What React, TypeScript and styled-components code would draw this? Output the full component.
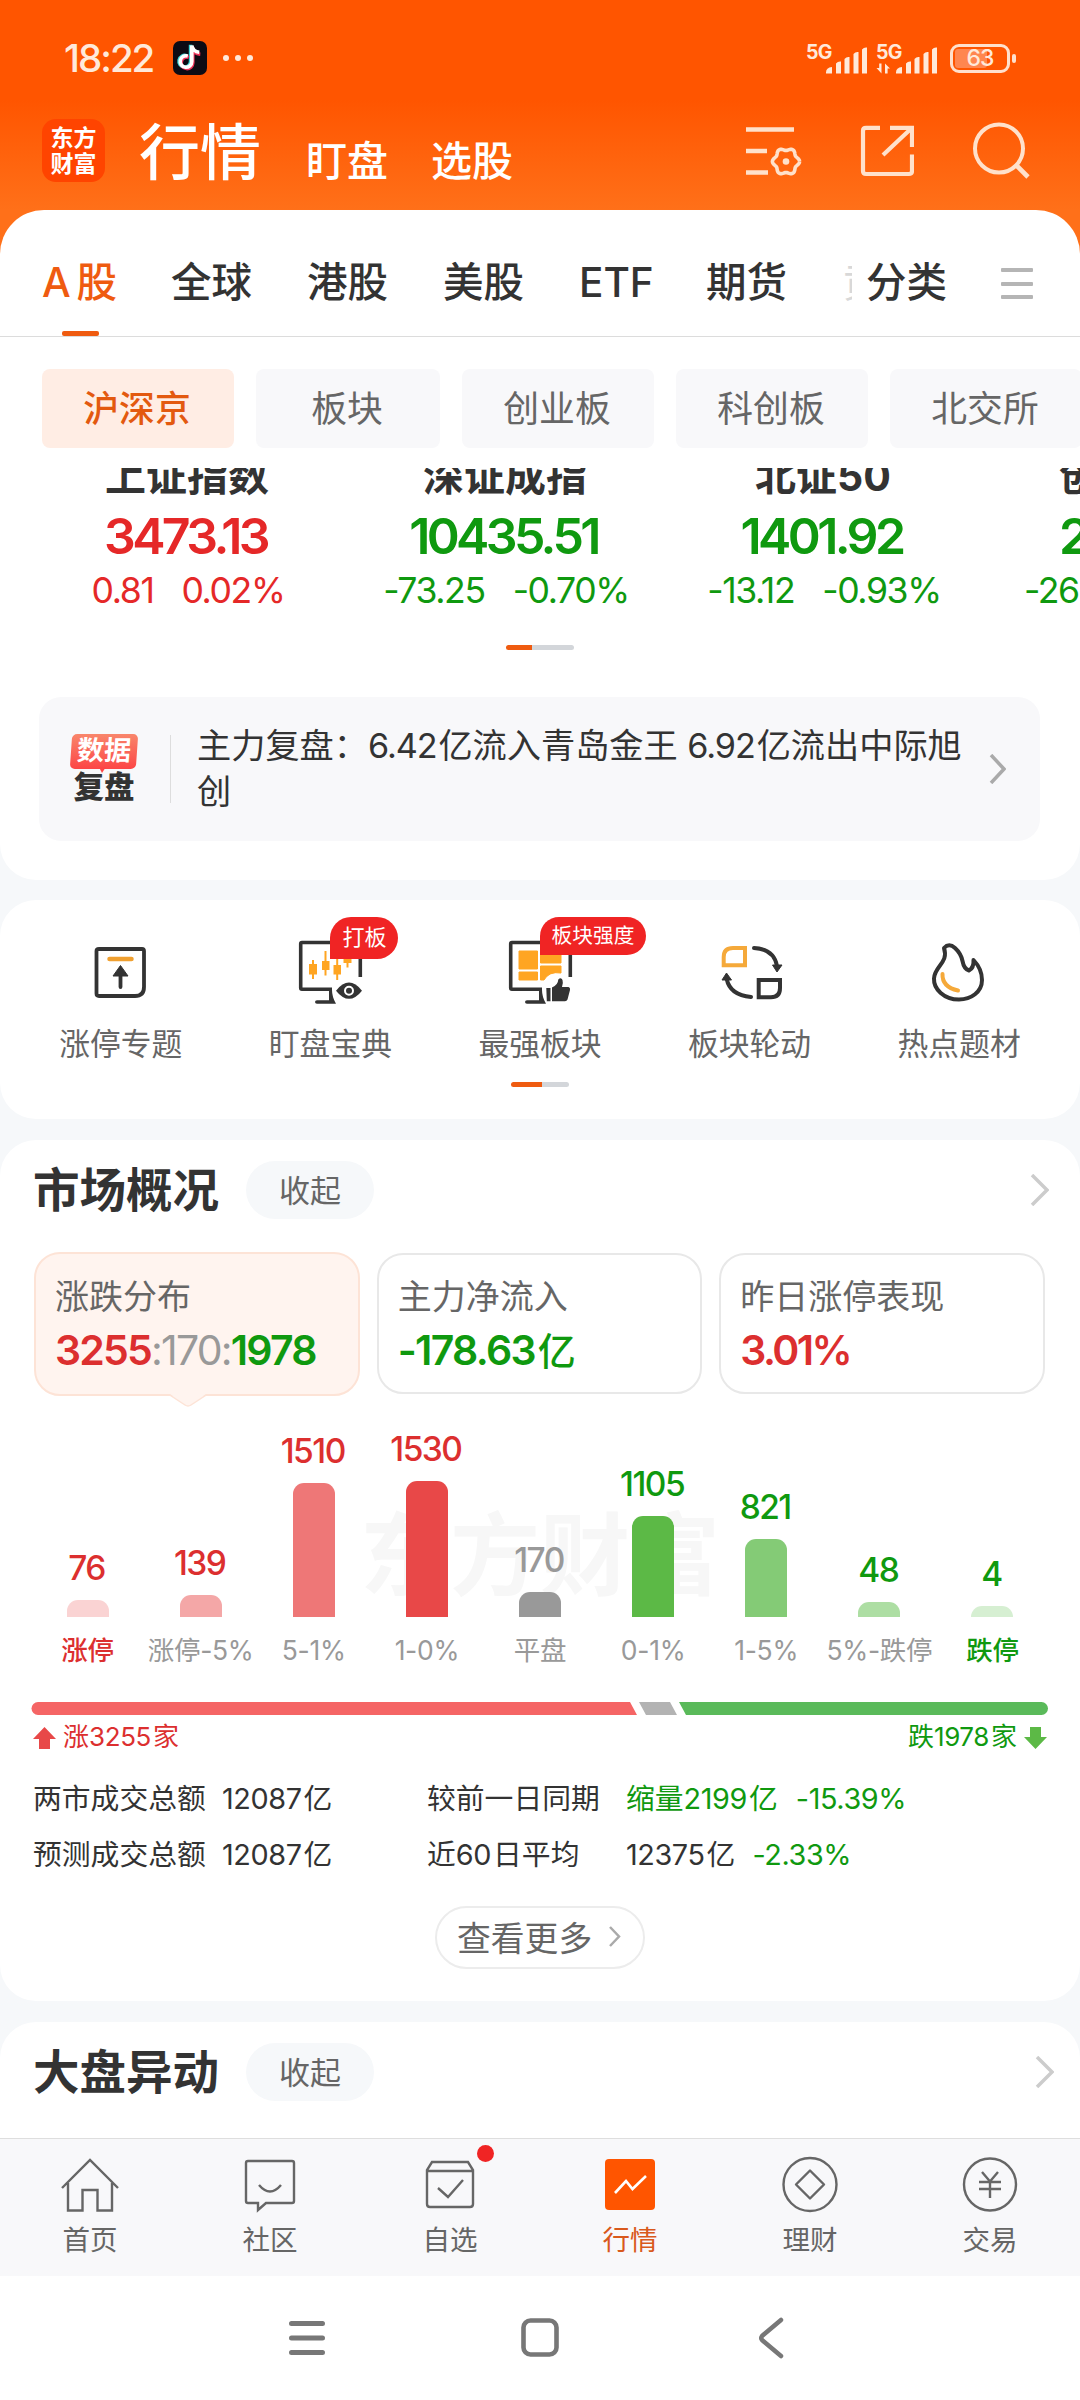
import React from "react";
import styled, { createGlobalStyle } from "styled-components";

const RED = "#dc2f2f";
const GREEN = "#0f990f";
const ORANGE = "#ef5b10";

const Global = createGlobalStyle`
  * { box-sizing: border-box; }
  html, body { margin: 0; padding: 0; background: #fff; }
  body { overflow: hidden; }
  svg { display: block; flex: none; }
`;

const Screen = styled.div`
  width: 1080px;
  height: 2400px;
  overflow: hidden;
  display: flex;
  flex-direction: column;
  background: #f6f8fa;
  color: #333;
  font-family: Inter, "Noto Sans CJK SC", sans-serif;
  white-space: nowrap;
`;

/* ---------- text ---------- */

const Clock = styled.span`
  width: 90px;
  font-size: 38.5px;
  line-height: 1.2;
  font-weight: 500;
  letter-spacing: -2px;
`;

const Num = styled.span<{ $ls?: number }>`
  letter-spacing: ${(p) => p.$ls ?? -0.4}px;
  margin-right: 2px;
`;

const Tint = styled.span<{ $color: string; $weight?: number }>`
  color: ${(p) => p.$color};
  font-weight: ${(p) => p.$weight ?? "inherit"};
`;

/* ---------- header ---------- */

const Hero = styled.header`
  height: 272px;
  flex: none;
  margin-bottom: -62px;
  background: linear-gradient(#ff5500 0, #ff5500 100px, #ff7019 210px);
  color: #fff;
`;

const StatusBar = styled.div`
  height: 116px;
  display: flex;
  align-items: center;
  padding: 0 70px 0 64px;
  color: #ffe9da;
`;

const StatusLeft = styled.div`
  display: flex;
  align-items: center;
  flex: 1;
`;

const Dots = styled.div`
  display: flex;
  gap: 6px;
  margin-left: 16px;
  i {
    width: 6px;
    height: 6px;
    border-radius: 3px;
    background: #ffe9da;
  }
`;

const Battery = styled.div`
  position: relative;
  width: 60px;
  height: 29px;
  border: 3px solid #ffe0cc;
  border-radius: 9px;
  margin-left: 12px;
  padding: 2px;
  display: flex;
  &::before {
    content: "";
    width: 32px;
    border-radius: 3px;
    background: #ff8650;
  }
  &::after {
    content: "";
    position: absolute;
    right: -9px;
    top: 7px;
    width: 4px;
    height: 9px;
    border-radius: 2px;
    background: #ffe0cc;
  }
`;

const BatteryText = styled.span`
  position: absolute;
  inset: 0;
  text-align: center;
  font-size: 23px;
  line-height: 23px;
  font-weight: 500;
  letter-spacing: -1px;
`;

const TitleBar = styled.div`
  height: 94px;
  display: flex;
  padding: 3px 47px 0 42px;
`;

const Logo = styled.div`
  width: 63px;
  height: 63px;
  border-radius: 14px;
  background: #ff4400;
  display: flex;
  flex-direction: column;
  justify-content: center;
  align-items: center;
  font-size: 23px;
  line-height: 26px;
  font-weight: 700;
`;

const Titles = styled.div`
  flex: 1;
  display: flex;
  align-items: baseline;
  line-height: 72px;
  margin-left: 34px;
  margin-top: -2px;
`;

const TitleMain = styled.span`
  font-size: 61px;
  font-weight: 500;
  line-height: 72px;
`;

const TitleSub = styled.span<{ $gap: number }>`
  position: relative;
  top: 1px;
  font-size: 41px;
  font-weight: 500;
  margin-left: ${(p) => p.$gap}px;
`;

const HeaderIcons = styled.div`
  display: flex;
`;

/* ---------- first sheet ---------- */

const Card = styled.section<{ $h: number; $mb?: number; $r?: string }>`
  flex: none;
  display: flex;
  flex-direction: column;
  height: ${(p) => p.$h}px;
  margin-bottom: ${(p) => p.$mb ?? 0}px;
  border-radius: ${(p) => p.$r ?? "36px"};
  background: #fff;
  overflow: hidden;
`;

const Tabs = styled.nav`
  height: 127px;
  flex: none;
  border-bottom: 1px solid #dcdcdc;
  display: flex;
  padding-left: 42px;
`;

const Tab = styled.div<{ $w: number; $active?: boolean }>`
  width: ${(p) => p.$w}px;
  flex: none;
  padding-top: 48px;
  font-size: 40.5px;
  line-height: 50px;
  font-weight: 500;
  word-spacing: -5px;
  color: ${(p) => (p.$active ? ORANGE : "#333")};
  &::after {
    content: "";
    display: ${(p) => (p.$active ? "block" : "none")};
    width: 37px;
    height: 5px;
    margin: 23px 0 0 20px;
    border-radius: 2px;
    background: ${ORANGE};
  }
`;

const FadedTab = styled(Tab)`
  overflow: hidden;
  color: #d8d8d8;
  margin-right: 14px;
  font-weight: 400;
`;

const Burger = styled.div`
  margin: 58px 0 0 21px;
  display: flex;
  flex-direction: column;
  gap: 9.5px;
  i {
    width: 32px;
    height: 4px;
    border-radius: 1px;
    background: #b5b5b5;
  }
`;

const Chips = styled.div`
  display: flex;
  flex: none;
  gap: 22px;
  padding: 32px 0 0 42px;
  height: 131px;
`;

const Chip = styled.div<{ $w: number; $active?: boolean }>`
  flex: none;
  width: ${(p) => p.$w}px;
  height: 79px;
  border-radius: 8px;
  display: flex;
  justify-content: center;
  align-items: center;
  padding: 0 2px 5px 0;
  font-size: 35.8px;
  background: ${(p) => (p.$active ? "#ffede4" : "#f8f8fa")};
  color: ${(p) => (p.$active ? "#e3590f" : "#666")};
  font-weight: ${(p) => (p.$active ? 500 : 400)};
`;

const Indices = styled.div`
  display: flex;
  flex: none;
  height: 167px;
  overflow: hidden;
  padding-left: 29px;
`;

const IndexCell = styled.div<{ $color: string }>`
  flex: none;
  width: 318px;
  display: flex;
  flex-direction: column;
  align-items: center;
  color: ${(p) => p.$color};
`;

const ClippedCell = styled(IndexCell)`
  width: 97px;
  padding-left: 76px;
  align-items: flex-start;
`;

const IndexName = styled.div`
  height: 38px;
  margin-top: -17px;
  padding-right: 2px;
  font-size: 41px;
  line-height: 50px;
  font-weight: 700;
  color: #333;
`;

const IndexValue = styled.div`
  margin-top: 17px;
  height: 60px;
  padding-right: 5px;
  font-size: 50px;
  line-height: 60px;
  font-weight: 600;
  letter-spacing: -3.6px;
`;

const IndexChange = styled.div<{ $ml?: number }>`
  margin-top: 3px;
  margin-left: ${(p) => p.$ml ?? 0}px;
  height: 44px;
  display: flex;
  gap: 28px;
  font-size: 35.6px;
  line-height: 44px;
  letter-spacing: -1.4px;
`;

const Pager = styled.div<{ $w: number; $on: number; $mt: number }>`
  flex: none;
  width: ${(p) => p.$w}px;
  height: 5px;
  margin: ${(p) => p.$mt}px auto 0;
  border-radius: 2.5px;
  background: linear-gradient(90deg, ${ORANGE} ${(p) => p.$on}px, #d3d6da ${(p) => p.$on}px);
`;

const Review = styled.div`
  flex: none;
  margin: 47px 40px 0 39px;
  height: 144px;
  border-radius: 22px;
  background: #f8f8fa;
  display: flex;
  align-items: center;
`;

const ReviewBadge = styled.div`
  margin-left: 31px;
  width: 68px;
  display: flex;
  flex-direction: column;
  align-items: center;
`;

const ReviewTop = styled.div`
  position: relative;
  width: 66px;
  height: 35px;
  border-radius: 5px;
  transform: skewX(-4deg);
  background: linear-gradient(#f9866b, #fc4646);
  color: #fff;
  text-align: center;
  font-size: 27px;
  line-height: 33px;
  font-weight: 700;
  &::after {
    content: "";
    position: absolute;
    left: 29px;
    top: 33px;
    width: 7px;
    height: 6px;
    background: #fc4646;
    clip-path: polygon(0 0, 100% 0, 50% 100%);
  }
`;

const ReviewBottom = styled.div`
  font-size: 30.5px;
  line-height: 35px;
  font-weight: 900;
`;

const ReviewText = styled.div`
  width: 772px;
  margin-left: 26px;
  margin-right: 20px;
  font-size: 34.2px;
  line-height: 46px;
  white-space: pre-line;
`;

const VLine = styled.div`
  width: 1px;
  height: 68px;
  margin-left: 32px;
  background: #ddd;
`;

/* ---------- quick entries ---------- */

const QuickRow = styled.div`
  display: flex;
  flex: none;
  height: 182px;
  padding: 37px 16px 0;
`;

const Quick = styled.div`
  position: relative;
  flex: 1;
  display: flex;
  flex-direction: column;
  align-items: center;
  font-size: 30.8px;
  color: #666;
  gap: 17px;
  line-height: 40px;
`;

const Badge = styled.span<{ $h: number; $w: number; $fs: number }>`
  position: absolute;
  left: 50%;
  top: -20px;
  width: ${(p) => p.$w}px;
  height: ${(p) => p.$h}px;
  line-height: ${(p) => p.$h - 1}px;
  font-size: ${(p) => p.$fs}px;
  text-align: center;
  color: #fff;
  background: #f02424;
  border-radius: 21px 21px 21px 0;
`;

/* ---------- market overview ---------- */

const SectionHead = styled.div<{ $pr: number }>`
  flex: none;
  height: 58px;
  margin-top: 21px;
  padding: 0 ${(p) => p.$pr}px 0 33px;
  display: flex;
  align-items: center;
`;

const SectionTitle = styled.h2`
  margin: 0;
  width: 213px;
  font-size: 46.5px;
  line-height: 58px;
  font-weight: 700;
`;

const Pill = styled.div`
  width: 128px;
  height: 58px;
  border-radius: 29px;
  background: #f6f8fa;
  color: #666;
  display: flex;
  align-items: center;
  justify-content: center;
  padding-bottom: 3px;
  font-size: 31px;
  margin-right: auto;
`;

const StatRow = styled.div`
  flex: none;
  display: flex;
  gap: 17px;
  padding: 0 35px 0 34px;
  margin-top: 33px;
  height: 144px;
`;

const Stat = styled.div<{ $active?: boolean }>`
  position: relative;
  flex: 1;
  margin: ${(p) => (p.$active ? "0" : "1px 0 2px")};
  border: 2px solid ${(p) => (p.$active ? "#fde3d6" : "#e8e8e8")};
  background: ${(p) => (p.$active ? "#fff4ef" : "#fff")};
  border-radius: 26px;
  padding: ${(p) => (p.$active ? 20 : 19)}px 0 0 19px;
  font-size: 34px;
  line-height: 46px;
  color: #666;
`;

const StatValue = styled.div<{ $color: string; $ls?: number }>`
  margin-top: 5px;
  height: 50px;
  font-size: 41px;
  line-height: 50px;
  font-weight: 600;
  letter-spacing: ${(p) => p.$ls ?? -1.7}px;
  color: ${(p) => p.$color};
`;

const Unit = styled.span`
  margin-left: 3px;
  font-size: 38px;
  font-weight: 500;
`;

const Pointer = styled.svg`
  position: absolute;
  left: 134px;
  top: 140px;
`;

const Chart = styled.div`
  position: relative;
  flex: none;
  height: 275px;
  padding: 0 31px;
  display: flex;
  align-items: flex-end;
`;

const Watermark = styled.div`
  position: absolute;
  left: 360px;
  top: 100px;
  font-size: 90px;
  line-height: 120px;
  font-weight: 700;
  color: #f7f7f7;
`;

const Column = styled.div`
  position: relative;
  flex: 1;
  display: flex;
  flex-direction: column;
  align-items: center;
`;

const ColumnValue = styled.div<{ $color: string }>`
  font-size: 33.5px;
  line-height: 40px;
  font-weight: 500;
  letter-spacing: -1.5px;
  padding-right: 2px;
  margin-bottom: 12px;
  color: ${(p) => p.$color};
`;

const Bar = styled.div<{ $color: string }>`
  width: 42px;
  border-radius: 11px 11px 0 0;
  background: ${(p) => p.$color};
`;

const ColumnLabel = styled.div<{ $color: string; $strong?: boolean }>`
  height: 54px;
  padding-top: 16px;
  font-size: 26.5px;
  line-height: 34px;
  letter-spacing: -0.3px;
  font-weight: ${(p) => (p.$strong ? 500 : 400)};
  color: ${(p) => p.$color};
`;

const Ratio = styled.svg`
  margin: 31px 0 0 31px;
`;

const RatioLegend = styled.div`
  flex: none;
  height: 44px;
  padding: 0 33px;
  display: flex;
  justify-content: space-between;
  align-items: center;
`;

const Side = styled.div<{ $color: string }>`
  display: flex;
  align-items: center;
  gap: 7px;
  font-size: 26px;
  line-height: 30px;
  color: ${(p) => p.$color};
`;

const SideText = styled.span`
  padding-bottom: 2px;
`;

const Totals = styled.div`
  flex: none;
  display: grid;
  grid-template-columns: 189px 205px 199px auto;
  grid-auto-rows: 56px;
  align-items: center;
  margin-top: 8px;
  padding-left: 33px;
  font-size: 28.8px;
`;

const Delta = styled.span<{ $ml?: number }>`
  margin-left: ${(p) => p.$ml ?? 0}px;
  color: ${GREEN};
`;

const More = styled.div`
  flex: none;
  width: 210px;
  height: 63px;
  margin: 26px auto 0;
  border: 2px solid #ececec;
  border-radius: 32px;
  display: flex;
  align-items: center;
  gap: 16px;
  padding: 0 0 3px 20px;
  font-size: 33.8px;
  color: #666;
`;

/* ---------- bottom ---------- */

const TabBar = styled.nav`
  flex: none;
  height: 138px;
  border-top: 1px solid #dedede;
  background: #f8f8fa;
  display: flex;
  padding-top: 15px;
`;

const TabItem = styled.div<{ $active?: boolean }>`
  position: relative;
  flex: 1;
  display: flex;
  flex-direction: column;
  align-items: center;
  gap: 8px;
  font-size: 27.5px;
  line-height: 36px;
  color: ${(p) => (p.$active ? "#d9591c" : "#666")};
`;

const RedDot = styled.i`
  position: absolute;
  left: 117px;
  top: -9px;
  width: 17px;
  height: 17px;
  border-radius: 50%;
  background: #f02424;
`;

const SystemNav = styled.div`
  flex: none;
  height: 124px;
  background: #fff;
  display: flex;
  align-items: center;
  padding-left: 287px;
  gap: 192px;
`;

/* ---------- icons ---------- */

const Chevron = ({ w, h, color = "#ccc", sw = 3.5 }: { w: number; h: number; color?: string; sw?: number }) => (
  <svg width={w} height={h} viewBox={`0 0 ${w} ${h}`} fill="none" stroke={color} strokeWidth={sw}>
    <path d={`M2 1L${w - 2} ${h / 2}L2 ${h - 1}`} />
  </svg>
);

const gear = Array.from({ length: 73 }, (_, i) => {
  const a = (i / 72) * Math.PI * 2;
  const r = 12.3 + 1.3 * Math.cos(6 * a);
  return `${i ? "L" : "M"}${(42 + r * Math.cos(a)).toFixed(2)} ${(42.5 + r * Math.sin(a)).toFixed(2)}`;
}).join("");

const SignalIcon = styled.svg<{ $ml: number }>`
  margin-left: ${(p) => p.$ml}px;
`;

const Signal = ({ arrows, ml }: { arrows?: boolean; ml: number }) => (
  <SignalIcon $ml={ml} width="62" height="34" fill="#ffe9da">
    <text x="0" y="17.5" fontSize="19.5" fontWeight="700" fontFamily="Inter" letterSpacing="-0.8">5G</text>
    <path d="M20 32.500v-1q0-5 6-5.500v6.500zM30 32.500v-10q2-2.500 5-2v12zM38.500 32.500v-14.500q2-2.500 5-2v16.500zM47.500 32.500v-19.500q2-2.500 5-2v21.500zM56 32.500v-24q2-2.500 5-2v26z" />
    {arrows && <path d="M5.500 22.500v10l-5-5.500h2.700v-4.500zM9 32.500v-10l5 5h-2.400v5z" />}
  </SignalIcon>
);

const AppIcon = styled.svg`
  margin-left: 19px;
`;

const TikTok = () => (
  <AppIcon width="34" height="34" viewBox="0 0 34 34">
    <rect width="34" height="34" rx="7" fill="#0d0b14" />
    <g fill="none" strokeWidth="3.600">
      <path d="M14.500 15.500a5.800 5.800 0 1 0 4 5.500V4.500" transform="translate(-.9 -.8)" stroke="#3fd6d6" />
      <path d="M15.500 15.500a5.800 5.800 0 1 0 4 5.500V6q1 6 7.500 6.500" transform="translate(.3 .8)" stroke="#f0325a" />
      <path d="M14.800 15a5.800 5.800 0 1 0 4 5.500V4.500q1 6 7.500 6.800" stroke="#fff" />
    </g>
  </AppIcon>
);

const Monitor = () => (
  <>
    <path d="M65.300 40V6.500q0-1-1-1H7q-1.300 0-1.300 1.300V51q0 1.200 1.300 1.200H37" fill="none" stroke="#333" strokeWidth="3.600" />
    <path d="M34 53h3q0 7 4 13.700H22q-2 0-2-1.700t2-1.700h12z" fill="#333" />
  </>
);

const quickIcons = [
  <svg width="70" height="70" fill="none" stroke="#333" strokeWidth="3.800">
    <path d="M13 12H56q2 0 2 2V50q0 9-9 9H13q-2.500 0-2.500-2.500V14q0-2 2.500-2z" />
    <path d="M23.500 22H45.500" stroke="#f0a030" strokeWidth="4.500" strokeLinecap="round" />
    <path d="M34.500 38V50" strokeLinecap="round" />
    <path d="M34.500 28.500L42 39H27z" fill="#333" stroke="#333" strokeWidth="1" />
  </svg>,
  <svg width="70" height="70">
    <Monitor />
    <g fill="#ffa522">
      <path d="M14 27h8v10.500h-8zM27 24h7.500v9H27zM38.500 28H46v9.500h-7.500zM48.500 20h8v6h-8zM17 23h2v19h-2zM29.500 14h2v24.500h-2zM41.200 21h2v22h-2zM51.500 18h2v12.500h-2z" />
    </g>
    <path d="M41 53.700Q54 37.500 67 53.700Q54 70 41 53.700z" fill="#333" />
    <circle cx="54" cy="53.700" r="4" fill="none" stroke="#fff" strokeWidth="2" />
  </svg>,
  <svg width="70" height="70">
    <Monitor />
    <path d="M14 14h18.500v18H14zM35.500 14H56v12H35.500zM14 35h18.500v8H14zM35.500 29H56v7q-12-2-17 7h-3.500z" fill="#ffa522" stroke="#ffa522" strokeLinejoin="round" />
    <circle cx="54" cy="54" r="15" fill="#fff" />
    <path d="M41.300 51h4.200v13.300h-3.700zM47 50.500q6-2.500 6.300-8 2.700-2.500 4.200.5 1 3-.5 7h6.500q2 .5 1.500 3l-2.500 9.500q-.7 1.800-2.500 1.800H47z" fill="#333" />
  </svg>,
  <svg width="70" height="70" fill="none" stroke="#333" strokeWidth="4">
    <path d="M18 11H30V28.300H8.700V20q0-9 9.300-9z" stroke="#f5a93a" />
    <path d="M43.700 43H65V51q0 9.300-9 9.300H43.700z" />
    <path d="M39 11Q59 12 62 29M36 60Q15 58 11.700 42" strokeLinecap="round" />
    <path d="M57.500 28H67L62 35zM7 43H16.500L11.500 36z" fill="#333" strokeWidth="1" />
  </svg>,
  <svg width="70" height="70" fill="none" stroke="#333" strokeWidth="4" strokeLinejoin="round">
    <path d="M20 11Q25 5.500 31 11Q37 16.500 38.500 24Q40 32 45 33.500Q50 31 49.500 23Q58 32 58 43C58 55 47 62.500 35 62.500C20 62.500 9.500 52 10 41.500C10.500 29 25 26 20 11z" />
    <path d="M18.500 37Q18 50 34 53.500" stroke="#f5a93a" strokeLinecap="round" />
  </svg>,
];

const quick: { label: string; badge?: [string, number, number, number] }[] = [
  { label: "涨停专题" },
  { label: "盯盘宝典", badge: ["打板", 68, 42, 22] },
  { label: "最强板块", badge: ["板块强度", 106, 38, 20.7] },
  { label: "板块轮动" },
  { label: "热点题材" },
];

const columns: [string, string, number, string, string, string][] = [
  ["76", "涨停", 17, "#fad3d3", RED, RED],
  ["139", "涨停-5%", 22, "#f4a7a7", RED, "#999"],
  ["1510", "5-1%", 134, "#ee7777", RED, "#999"],
  ["1530", "1-0%", 136, "#e84848", RED, "#999"],
  ["170", "平盘", 25, "#999", "#999", "#999"],
  ["1105", "0-1%", 101, "#5cb946", GREEN, "#999"],
  ["821", "1-5%", 78, "#84cb76", GREEN, "#999"],
  ["48", "5%-跌停", 15, "#addea3", GREEN, "#999"],
  ["4", "跌停", 11, "#d6efd2", GREEN, GREEN],
];

const indices: [string, string, string, string, string][] = [
  ["上证指数", "3473.13", "0.81", "0.02%", "#e52828"],
  ["深证成指", "10435.51", "-73.25", "-0.70%", GREEN],
  ["北证50", "1401.92", "-13.12", "-0.93%", GREEN],
];

const tabIcons = [
  <svg width="60" height="60" fill="none" stroke="#666" strokeWidth="2.400">
    <path d="M2 34L30 6L58 34M8 29V56.500H22.500V36H37.500V56.500H52V29" />
  </svg>,
  <svg width="60" height="60" fill="none" stroke="#666" strokeWidth="2.400">
    <path d="M8 7H52q2 0 2 2V47q0 2-2 2H26L18 56V49H8q-2 0-2-2V9q0-2 2-2zM19 31Q30 44 41 31" />
  </svg>,
  <svg width="60" height="60" fill="none" stroke="#666" strokeWidth="2.400">
    <path d="M12 8H48L53 16V50q0 3-3 3H10q-3 0-3-3V16zM7 17H53M18 34L28 43L43 26" />
  </svg>,
  <svg width="60" height="60" fill="none">
    <rect x="5" y="5" width="50" height="51" rx="4" fill="#ff5500" />
    <path d="M15 39L26 27L32.500 35L46 22" stroke="#fff" strokeWidth="2.600" />
  </svg>,
  <svg width="60" height="60" fill="none" stroke="#666" strokeWidth="2.400">
    <circle cx="30" cy="30.500" r="26.500" />
    <path d="M30 16.500L44 30.500L30 44.500L16 30.500z" strokeLinejoin="round" />
  </svg>,
  <svg width="60" height="60" fill="none" stroke="#666" strokeWidth="2.400">
    <circle cx="30" cy="30.500" r="26" />
    <path d="M22 18L30 27.500L38 18M19 28H41M19 35H41M30 27V44" />
  </svg>,
];

export default function App() {
  return (
    <Screen>
      <Global />
      <Hero>
        <StatusBar>
          <StatusLeft>
            <Clock>18:22</Clock>
            <TikTok />
            <Dots><i /><i /><i /></Dots>
          </StatusLeft>
          <Signal ml={0} />
          <Signal arrows ml={8} />
          <Battery><BatteryText>63</BatteryText></Battery>
        </StatusBar>
        <TitleBar>
          <Logo><span>东方</span><span>财富</span></Logo>
          <Titles>
            <TitleMain>行情</TitleMain>
            <TitleSub $gap={45}>盯盘</TitleSub>
            <TitleSub $gap={43}>选股</TitleSub>
          </Titles>
          <HeaderIcons>
            <svg width="60" height="64" fill="none" stroke="#ffe1cb" strokeWidth="4.400">
              <path d="M2 10.500H50M2 32H23M2 53.500H24" />
              <path d={gear} strokeWidth="3.600" />
              <circle cx="42" cy="42.500" r="3.300" fill="#ffe1cb" stroke="none" />
            </svg>
            <svg width="110" height="64" fill="none" stroke="#ffe1cb" strokeWidth="4.200">
              <path d="M76 8.800H62q-3 0-3 3V52q0 3 3 3H105q3 0 3-3V35.500M86 8.800H108V28M108 8.800L79 36" />
            </svg>
            <svg width="119" height="64" fill="none" stroke="#ffe1cb" strokeWidth="4">
              <circle cx="85" cy="29.500" r="24" />
              <path d="M102 46L114 58" strokeWidth="4.600" />
            </svg>
          </HeaderIcons>
        </TitleBar>
      </Hero>

      <Card $h={670} $mb={20} $r="44px 44px 36px 36px">
        <Tabs>
          <Tab $w={129} $active>A 股</Tab>
          <Tab $w={136}>全球</Tab>
          <Tab $w={136}>港股</Tab>
          <Tab $w={136}>美股</Tab>
          <Tab $w={127}>ETF</Tab>
          <Tab $w={137}>期货</Tab>
          <FadedTab $w={9}>黄</FadedTab>
          <Tab $w={114}>分类</Tab>
          <Burger><i /><i /><i /></Burger>
        </Tabs>
        <Chips>
          <Chip $w={192} $active>沪深京</Chip>
          <Chip $w={184}>板块</Chip>
          <Chip $w={192}>创业板</Chip>
          <Chip $w={192}>科创板</Chip>
          <Chip $w={192}>北交所</Chip>
        </Chips>
        <Indices>
          {indices.map(([name, value, diff, pct, color]) => (
            <IndexCell key={name} $color={color}>
              <IndexName>{name}</IndexName>
              <IndexValue>{value}</IndexValue>
              <IndexChange><span>{diff}</span><span>{pct}</span></IndexChange>
            </IndexCell>
          ))}
          <ClippedCell $color={GREEN}>
            <IndexName>创</IndexName>
            <IndexValue>2</IndexValue>
            <IndexChange $ml={-35}>-26</IndexChange>
          </ClippedCell>
        </Indices>
        <Pager $w={68} $on={26} $mt={10} />
        <Review>
          <ReviewBadge>
            <ReviewTop>数据</ReviewTop>
            <ReviewBottom>复盘</ReviewBottom>
          </ReviewBadge>
          <VLine />
          <ReviewText>
            主力复盘：<Num $ls={-1.1}>6.42</Num>亿流入青岛金王 <Num $ls={-1.1}>6.92</Num>亿流出中际旭{"\n"}创
          </ReviewText>
          <Chevron w={17} h={30} color="#aaa" />
        </Review>
      </Card>

      <Card $h={219} $mb={21}>
        <QuickRow>
          {quick.map((q, i) => (
            <Quick key={q.label}>
              {quickIcons[i]}
              {q.badge && <Badge $w={q.badge[1]} $h={q.badge[2]} $fs={q.badge[3]}>{q.badge[0]}</Badge>}
              {q.label}
            </Quick>
          ))}
        </QuickRow>
        <Pager $w={58} $on={31} $mt={0} />
      </Card>

      <Card $h={861} $mb={21}>
        <SectionHead $pr={31}>
          <SectionTitle>市场概况</SectionTitle>
          <Pill>收起</Pill>
          <Chevron w={19} h={32} />
        </SectionHead>
        <StatRow>
          <Stat $active>
            涨跌分布
            <StatValue $color={RED} $ls={-1.8}>
              3255<Tint $color="#999" $weight={400}>:170:</Tint><Tint $color={GREEN}>1978</Tint>
            </StatValue>
            <Pointer width="36" height="13">
              <path d="M0 0L15 11q3 2 6 0L36 0z" fill="#fff4ef" />
              <path d="M0 1L15 11q3 2 6 0L36 1" fill="none" stroke="#fde3d6" strokeWidth="1.500" />
            </Pointer>
          </Stat>
          <Stat>
            主力净流入
            <StatValue $color={GREEN}>-178.63<Unit>亿</Unit></StatValue>
          </Stat>
          <Stat>
            昨日涨停表现
            <StatValue $color={RED} $ls={-2.6}>3.01%</StatValue>
          </Stat>
        </StatRow>
        <Chart>
          <Watermark>东方财富</Watermark>
          {columns.map(([value, label, h, bar, vc, lc]) => (
            <Column key={label}>
              <ColumnValue $color={vc}>{value}</ColumnValue>
              <Bar $color={bar} style={{ height: h }} />
              <ColumnLabel $color={lc} $strong={lc !== "#999"}>{label}</ColumnLabel>
            </Column>
          ))}
        </Chart>
        <Ratio width="1018" height="14">
          <path d="M7 0H599L606 13H7a6.500 6.500 0 0 1 0-13z" fill="#f56565" />
          <path d="M608 0H639L646 13H615z" fill="#b3b3b3" />
          <path d="M648 0H1010.500a6.500 6.500 0 0 1 0 13H655z" fill="#5aba5a" />
        </Ratio>
        <RatioLegend>
          <Side $color={RED}>
            <svg width="23" height="22"><path d="M11.500 0L23 12H17V22H6V12H0z" fill="#e84848" /></svg>
            <SideText>涨<Num>3255</Num>家</SideText>
          </Side>
          <Side $color={GREEN}>
            <SideText>跌<Num>1978</Num>家</SideText>
            <svg width="23" height="22"><path d="M11.500 22L23 10H17V0H6V10H0z" fill="#5cb946" /></svg>
          </Side>
        </RatioLegend>
        <Totals>
          <span>两市成交总额</span>
          <span><Num>12087</Num>亿</span>
          <span>较前一日同期</span>
          <span><Delta>缩量<Num>2199</Num>亿</Delta><Delta $ml={18}><Num>-15.39%</Num></Delta></span>
          <span>预测成交总额</span>
          <span><Num>12087</Num>亿</span>
          <span>近<Num>60</Num>日平均</span>
          <span><Num>12375</Num>亿<Delta $ml={17}><Num>-2.33%</Num></Delta></span>
        </Totals>
        <More>查看更多<Chevron w={13} h={21} color="#aaa" sw={2.5} /></More>
      </Card>

      <Card $h={116} $r="36px 36px 0 0">
        <SectionHead $pr={26}>
          <SectionTitle>大盘异动</SectionTitle>
          <Pill>收起</Pill>
          <Chevron w={19} h={32} />
        </SectionHead>
      </Card>

      <TabBar>
        {["首页", "社区", "自选", "行情", "理财", "交易"].map((t, i) => (
          <TabItem key={t} $active={t === "行情"}>
            {tabIcons[i]}
            {t === "自选" && <RedDot />}
            {t}
          </TabItem>
        ))}
      </TabBar>
      <SystemNav>
        <svg width="40" height="44" fill="none" stroke="#777" strokeWidth="5" strokeLinecap="round">
          <path d="M4.500 7.500H35.500M4.500 22H35.500M4.500 36.500H35.500" />
        </svg>
        <svg width="42" height="44" fill="none" stroke="#777" strokeWidth="4.600">
          <rect x="4.500" y="4.500" width="33" height="34" rx="7" />
        </svg>
        <svg width="40" height="44" fill="none" stroke="#777" strokeWidth="4.500" strokeLinecap="round" strokeLinejoin="round">
          <path d="M28 4L9 20Q7.500 22 9 24L28 40" />
        </svg>
      </SystemNav>
    </Screen>
  );
}
